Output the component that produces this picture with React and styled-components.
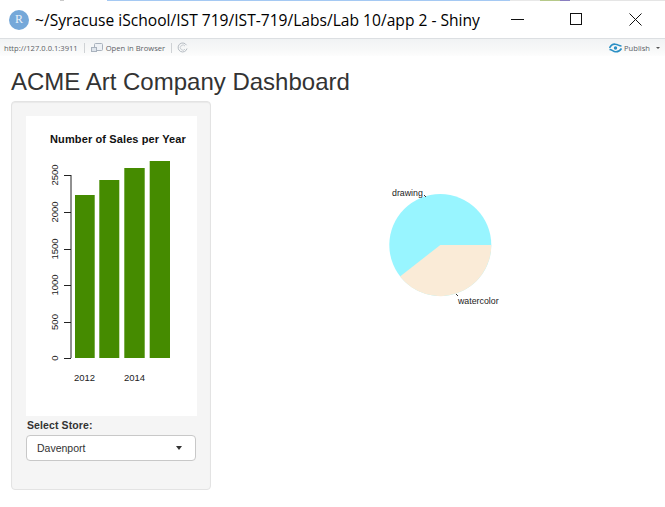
import React from "react";
import styled, { createGlobalStyle } from "styled-components";

const Global = createGlobalStyle`
  html, body { margin: 0; padding: 0; background: #fff; }
  body { width: 665px; height: 507px; overflow: hidden; font-family: "Liberation Sans", Arial, sans-serif; }
`;
const Page = styled.div`display: flex; flex-direction: column; width: 665px; height: 507px; background: #fff;`;
const DesktopStrip = styled.div`
  height: 1px;
  background: linear-gradient(90deg, #fff 0 60px, #c9c9c9 60px 64px, #fff 64px 107px, #a5c9f3 107px 510px, #e8e8e8 510px 540px, #b6c98a 540px 560px, #8a7fc0 560px 570px, #e5e5e5 570px);
`;
const TitleBar = styled.div`display: flex; align-items: center; height: 37px; background: #fff; padding-left: 9px;`;
const RLogo = styled.div`
  width: 20px; height: 20px; border-radius: 50%; background: #75a8d9; color: #e8f1fa;
  display: flex; align-items: center; justify-content: center;
  font: 12px "Liberation Serif", serif; flex: none;
`;
const WindowTitle = styled.div`
  margin-left: 6px; font: 15.6px "Open Sans", sans-serif; color: #000; white-space: nowrap; flex: 1;
`;
const WinButtons = styled.div`display: flex; align-items: center; gap: 36px; padding-right: 23px;`;
const WinIcon = styled.svg`display: block; width: 13px; height: 13px; flex: none; margin-left: ${p => p.$ml || 0}px;`;
const Toolbar = styled.div`
  display: flex; align-items: center; height: 17px; padding: 0 5px 0 4px;
  border-top: 1px solid #dcdfe2;
  background: linear-gradient(#f1f3f4, #f7f8f8 60%, #fdfdfd);
  font: 7.6px "Open Sans", sans-serif; color: #5c5f66;
`;
const Sep = styled.span`width: 1px; height: 10px; background: #cfd2d5; margin: 0 ${p => p.$r || 5}px 0 ${p => p.$l || 5}px;`;
const ToolIcon = styled.svg`display: block; flex: none; margin-right: ${p => p.$mr || 0}px;`;
const Spacer = styled.div`flex: 1;`;
const Caret = styled.span`
  width: 0; height: 0; margin-left: 6px; border-left: 2px solid transparent; border-right: 2px solid transparent; border-top: 2px solid #555;
`;
const Content = styled.div`padding: 0 11px; flex: 1;`;
const Heading = styled.h2`
  margin: 13px 0 6px; font: 500 24px/26.4px "Liberation Sans", Arial, sans-serif; color: #333;
`;
const Row = styled.div`display: flex; align-items: flex-start;`;
const Sidebar = styled.div`
  box-sizing: border-box; width: 200px; height: 389px; flex: none; padding: 14px 14px 0 14px;
  background: #f5f5f5; border: 1px solid #e3e3e3; border-radius: 4px;
  box-shadow: inset 0 1px 1px rgba(0,0,0,.05);
`;
const PlotBox = styled.svg`display: block; width: 171px; height: 300px; background: #fff; font-family: "Liberation Sans", Arial, sans-serif;`;
const Label = styled.div`margin: 2px 0 3px 1px; font: 700 10.5px/14px "Liberation Sans", Arial, sans-serif; color: #333; letter-spacing: .1px;`;
const Select = styled.div`
  box-sizing: border-box; width: 170px; height: 26px; display: flex; align-items: center; justify-content: space-between;
  padding: 0 13px 0 10px; background: #fff; border: 1px solid #c8c8c8; border-radius: 4px;
  font: 10.5px "Liberation Sans", Arial, sans-serif; color: #333;
`;
const SelectCaret = styled.span`
  width: 0; height: 0; border-left: 3.5px solid transparent; border-right: 3.5px solid transparent; border-top: 4px solid #333;
`;
const PieArea = styled.svg`display: block; width: 424px; height: 400px; margin-left: 4px; font-family: "Liberation Sans", Arial, sans-serif;`;

const bars = [
  [49, 19.7, 79],
  [73.3, 20, 64],
  [98.3, 20.4, 52],
  [123.7, 20.3, 45],
];
const ticks = [
  ["0", 242], ["500", 206], ["1000", 169], ["1500", 133], ["2000", 96], ["2500", 59],
];

const BarChart = () => (
  <PlotBox viewBox="0 0 171 300">
    <text x="24" y="27" fontSize="11" fontWeight="700" fill="#111" letterSpacing=".12">Number of Sales per Year</text>
    {bars.map(([x, w, y]) => <rect key={x} x={x} y={y} width={w} height={242 - y} fill="#458B00" />)}
    <line x1="45" x2="45" y1="59" y2="242" stroke="#222" strokeWidth="1" />
    {ticks.map(([t, y]) => (
      <g key={t}>
        <line x1="38" x2="45" y1={y + .5} y2={y + .5} stroke="#222" strokeWidth="1" />
        <text transform={`translate(32 ${y}) rotate(-90)`} textAnchor="middle" fontSize="9.5" fill="#222">{t}</text>
      </g>
    ))}
    <text x="48" y="265" fontSize="9.5" fill="#222">2012</text>
    <text x="98" y="265" fontSize="9.5" fill="#222">2014</text>
  </PlotBox>
);

const Pie = () => (
  <PieArea viewBox="0 0 424 400">
    <circle cx="225.3" cy="144" r="51" fill="#98F5FF" />
    <path d="M225.3 144 L276.3 144 A51 51 0 0 1 185 175.4 Z" fill="#FAEBD7" />
    <text x="177" y="95" fontSize="8.8" fill="#222">drawing</text>
    <path d="M209 94 L211 96" stroke="#333" strokeWidth="1" />
    <path d="M241 193 L243 195" stroke="#333" strokeWidth="1" />
    <text x="243" y="203" fontSize="8.8" fill="#222">watercolor</text>
  </PieArea>
);

export default function App() {
  return (
    <Page>
      <Global />
      <DesktopStrip />
      <TitleBar>
        <RLogo>R</RLogo>
        <WindowTitle>~/Syracuse iSchool/IST 719/IST-719/Labs/Lab 10/app 2 - Shiny</WindowTitle>
        <WinButtons>
          <WinIcon viewBox="0 0 13 13"><path d="M0 6.5H13" stroke="#111" /></WinIcon>
          <WinIcon viewBox="0 0 13 13" $ml={10}><rect x=".5" y=".5" width="11" height="11" fill="none" stroke="#111" /></WinIcon>
          <WinIcon viewBox="0 0 13 13" $ml={10}><path d="M.5.5 12.5 12.5M12.5.5.5 12.5" stroke="#111" /></WinIcon>
        </WinButtons>
      </TitleBar>
      <Toolbar>
        <span>http://127.0.0.1:3911</span>
        <Sep $l={6} $r={6} />
        <ToolIcon width="12" height="11" viewBox="0 0 12 11" $mr={3}>
          <rect x="3.5" y="1.5" width="8" height="7" rx="1" fill="#eef1f5" stroke="#a9b2bd" />
          <rect x=".5" y="5.5" width="5" height="4" fill="#dfe5ec" stroke="#a9b2bd" />
        </ToolIcon>
        <span>Open in Browser</span>
        <Sep $l={6} $r={5} />
        <ToolIcon width="11" height="11" viewBox="0 0 11 11">
          <path d="M9.5 3.2A4.5 4.5 0 1 0 10 6.5" fill="none" stroke="#b5bbc2" />
          <path d="M8 4A2.6 2.6 0 1 0 8 7.2" fill="none" stroke="#c8cdd2" />
        </ToolIcon>
        <Spacer />
        <ToolIcon width="13" height="10" viewBox="0 0 13 10" $mr={2}>
          <path d="M.5 5C2 2 4 .8 6.5 1.2 9 1.5 10 3 12.5 3" fill="none" stroke="#2b8fc4" strokeWidth="1.6" />
          <path d="M.5 6.5C3 6.5 4 8.5 6.5 8.8 9 9 11 7.8 12.5 5.5" fill="none" stroke="#2b8fc4" strokeWidth="1.6" />
          <circle cx="6.5" cy="5" r="1.7" fill="#2b8fc4" />
        </ToolIcon>
        <span>Publish</span>
        <Caret />
      </Toolbar>
      <Content>
        <Heading>ACME Art Company Dashboard</Heading>
        <Row>
          <Sidebar>
            <BarChart />
            <Label>Select Store:</Label>
            <Select>Davenport<SelectCaret /></Select>
          </Sidebar>
          <Pie />
        </Row>
      </Content>
    </Page>
  );
}
